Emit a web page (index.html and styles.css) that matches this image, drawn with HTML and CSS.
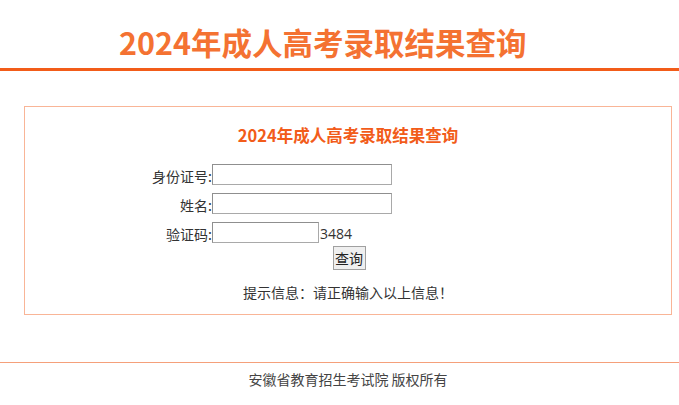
FILE: index.html
```html
<!DOCTYPE html>
<html lang="zh-CN">
<head>
  <meta charset="UTF-8">
  <title>2024年成人高考录取结果查询</title>
  <link rel="stylesheet" href="styles.css">
</head>
<body>
  <div class="header">
    <h1>2024年成人高考录取结果查询</h1>
  </div>

  <div class="query-box">
    <h2>2024年成人高考录取结果查询</h2>

    <form class="query-form">
      <div class="row row-first">
        <label for="sfzh">身份证号:</label>
        <input type="text" id="sfzh" class="field">
      </div>
      <div class="row">
        <label for="xm">姓名:</label>
        <input type="text" id="xm" class="field">
      </div>
      <div class="row row-code">
        <label for="yzm">验证码:</label>
        <input type="text" id="yzm" class="field field-short">
        <span class="code">3484</span>
      </div>
      <div class="btn-row">
        <button type="button">查询</button>
      </div>
    </form>

    <p class="tip">提示信息：请正确输入以上信息！</p>
  </div>

  <div class="footer">安徽省教育招生考试院 版权所有</div>
</body>
</html>
```

FILE: styles.css
```css
body {
  margin: 0;
  padding: 0;
  background-color: #fff;
  font-family: "Noto Sans CJK SC", "Noto Sans", sans-serif;
  color: #333;
}

.header {
  height: 68px;
  border-bottom: 3px solid #f25c19;
  box-sizing: content-box;
}

.header h1 {
  margin: 0;
  padding: 22px 0 0 119px;
  font-size: 30.5px;
  line-height: 40px;
  font-weight: bold;
  color: #f47232;
}

.query-box {
  margin: 35px 7px 0 24px;
  border: 1px solid #f9b597;
  height: 207px;
}

.query-box h2 {
  margin: 16px 0 0;
  font-size: 16.5px;
  line-height: 24px;
  text-align: center;
  color: #f25c1a;
}

.query-form {
  margin-top: 17px;
}

.row {
  display: flex;
  align-items: center;
  height: 21px;
  margin-bottom: 8px;
}

.row-code {
  margin-top: 4px;
  margin-bottom: 2px;
}

.row label {
  width: 187px;
  text-align: right;
  font-size: 14px;
  line-height: 21px;
  color: #333;
  padding-top: 3px;
}

.field {
  width: 180px;
  height: 21px;
  box-sizing: border-box;
  margin: 0;
  border: 1px solid #a9a9a9;
  border-top-color: #8f8f8f;
  border-left-color: #8f8f8f;
  padding: 1px 2px;
  font-size: 13px;
}

.field-short {
  width: 107px;
}

.code {
  font-family: "Open Sans", "Noto Sans", sans-serif;
  font-size: 14px;
  color: #333;
  padding-left: 1px;
  padding-top: 2px;
}

.btn-row {
  text-align: center;
  padding-left: 2px;
}

.btn-row button {
  width: 33px;
  height: 24px;
  padding: 0;
  font-family: "Noto Sans CJK SC", sans-serif;
  font-size: 14px;
  color: #222;
  background-color: #efefef;
  border: 1px solid #a0a0a0;
  border-radius: 0;
}

.tip {
  margin: 10px 0 0;
  text-align: center;
  font-size: 14px;
  line-height: 24px;
  color: #333;
}

.footer {
  margin-top: 47px;
  border-top: 1px solid #f5a07a;
  text-align: center;
  font-size: 14px;
  line-height: 20px;
  padding: 6px 0 0 17px;
  color: #444;
}
```
